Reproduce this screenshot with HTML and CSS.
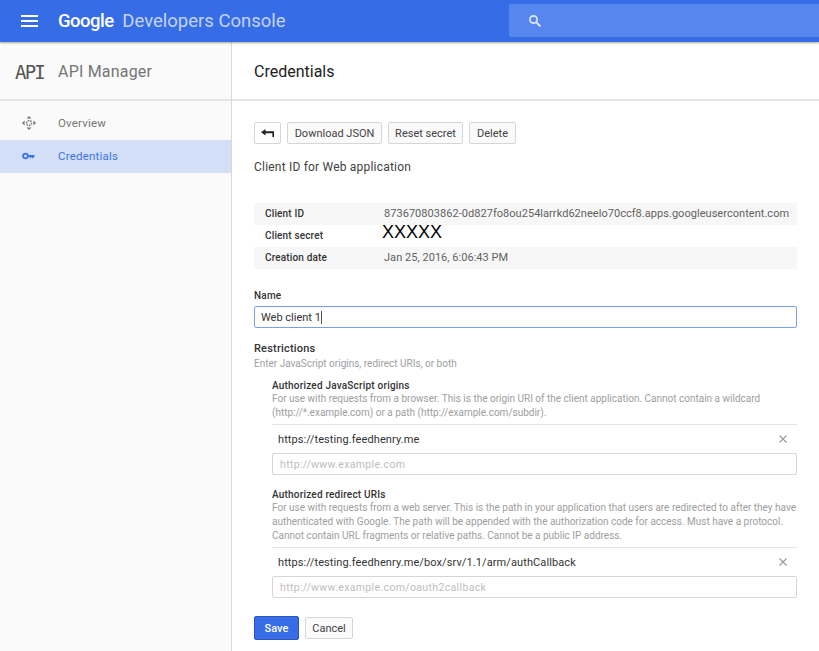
FILE: index.html
```html
<!DOCTYPE html>
<html lang="en">
<head>
    <meta charset="UTF-8">
    <meta name="viewport" content="width=device-width, initial-scale=1.0">
    <title>Credentials</title>
    <link rel="stylesheet" href="styles.css">
</head>
<body>
    <header class="topbar">
        <div class="menu-icon"><span></span><span></span><span></span></div>
        <div class="brand"><span class="brand-google">Google</span> Developers Console</div>
        <div class="search">
            <svg width="14" height="14" viewBox="0 0 14 14"><circle cx="5.500" cy="5.500" r="3.600" fill="none" stroke="#dfe8fb" stroke-width="1.700"/><path d="M8.300 8.300L12.400 12.400" stroke="#dfe8fb" stroke-width="2"/></svg>
        </div>
    </header>
    <div class="layout">
        <aside class="sidebar">
            <div class="side-title"><span class="api-logo">API</span><span>API Manager</span></div>
            <nav class="side-nav">
                <a class="nav-item">
                    <svg width="16" height="16" viewBox="0 0 16 16" fill="#757575"><path d="M8 1l2.400 2.600H5.600zM8 15l-2.400-2.600h4.800zM1 8l2.600-2.400v4.800zM15 8l-2.600 2.400V5.600z"/><path d="M5.500 8a2.500 2.500 0 0 1 5 0a2.500 2.500 0 0 1-5 0z" fill="none" stroke="#757575" stroke-width="1.500" stroke-dasharray="1.500 1"/></svg>
                    Overview
                </a>
                <a class="nav-item active">
                    <svg width="16" height="16" viewBox="0 0 16 16"><circle cx="4.500" cy="8" r="2.400" fill="none" stroke="#3f73e4" stroke-width="1.800"/><path d="M7 7h6.500v2h-1v1.200h-1.400V9h-.8v1.200H8.900V9H7z" fill="#3f73e4"/></svg>
                    Credentials
                </a>
            </nav>
        </aside>
        <main class="content">
            <h1 class="page-title">Credentials</h1>
            <div class="page-body">
                <div class="actions">
                    <button class="btn btn-back"><svg width="13" height="8" viewBox="0 0 13 8"><path d="M0 3.200L4.500 0v2.200h8.500V8h-1.600V4.200H4.500v2.200z" fill="#212121"/></svg></button>
                    <button class="btn btn-download">Download JSON</button>
                    <button class="btn btn-reset">Reset secret</button>
                    <button class="btn btn-delete">Delete</button>
                </div>
                <h2 class="sub-title">Client ID for Web application</h2>
                <div class="info-table">
                    <div class="info-row"><span class="info-label">Client ID</span><span>873670803862-0d827fo8ou254larrkd62neelo70ccf8.apps.googleusercontent.com</span></div>
                    <div class="info-row"><span class="info-label">Client secret</span><span class="redacted">XXXXX</span></div>
                    <div class="info-row"><span class="info-label">Creation date</span><span>Jan 25, 2016, 6:06:43 PM</span></div>
                </div>
                <label class="field-label">Name</label>
                <div class="field focused">Web client 1<span class="caret"></span></div>
                <div class="group-title">Restrictions</div>
                <div class="help">Enter JavaScript origins, redirect URIs, or both</div>
                <section class="uri-block first">
                    <div class="uri-title">Authorized JavaScript origins</div>
                    <p class="help">For use with requests from a browser. This is the origin URI of the client application. Cannot contain a wildcard<br>(http://*.example.com) or a path (http://example.com/subdir).</p>
                    <div class="uri-item"><span>https://testing.feedhenry.me</span><svg class="remove" width="8" height="8" viewBox="0 0 8 8"><path d="M.5.500l7 7M7.500.500l-7 7" stroke="#999" stroke-width="1.100"/></svg></div>
                    <div class="field placeholder">http://www.example.com</div>
                </section>
                <section class="uri-block">
                    <div class="uri-title">Authorized redirect URIs</div>
                    <p class="help">For use with requests from a web server. This is the path in your application that users are redirected to after they have<br>authenticated with Google. The path will be appended with the authorization code for access. Must have a protocol.<br>Cannot contain URL fragments or relative paths. Cannot be a public IP address.</p>
                    <div class="uri-item"><span>https://testing.feedhenry.me/box/srv/1.1/arm/authCallback</span><svg class="remove" width="8" height="8" viewBox="0 0 8 8"><path d="M.5.500l7 7M7.500.500l-7 7" stroke="#999" stroke-width="1.100"/></svg></div>
                    <div class="field placeholder">http://www.example.com/oauth2callback</div>
                </section>
                <div class="form-actions">
                    <button class="btn btn-save">Save</button>
                    <button class="btn btn-cancel">Cancel</button>
                </div>
            </div>
        </main>
    </div>
</body>
</html>
```

FILE: styles.css
```css
html, body {
    height: 100%;
}
body {
    margin: 0;
    height: 651px;
    overflow: hidden;
    font-family: Roboto, Arial, sans-serif;
    font-size: 11px;
    color: #333;
    background: #fff;
}
.topbar {
    display: flex;
    align-items: center;
    height: 42px;
    background: #366de6;
    box-shadow: 0 1px 2px rgba(0, 0, 0, 0.35);
    position: relative;
}
.menu-icon {
    display: flex;
    flex-direction: column;
    gap: 3px;
    width: 17px;
    margin-left: 21px;
}
.menu-icon span {
    height: 2px;
    background: #fff;
}
.brand {
    margin-left: 20px;
    font-size: 18.500px;
    color: #c3d4f8;
    white-space: nowrap;
    width: 451px;
}
.brand-google {
    margin-right: 4px;
    color: #fff;
    font-weight: 500;
    letter-spacing: -0.5px;
}
.search {
    display: flex;
    align-items: center;
    flex: 1;
    height: 33px;
    margin-top: -1px;
    padding-left: 19px;
    background: #5587ee;
    border-radius: 2px 0 0 2px;
}
.layout {
    display: flex;
    height: 609px;
}
.sidebar {
    width: 231px;
    flex: none;
    background: #fafafa;
    border-right: 1px solid #d9d9d9;
}
.side-title {
    display: flex;
    align-items: center;
    box-sizing: border-box;
    height: 59px;
    padding: 2px 0 0 15px;
    font-size: 16px;
    letter-spacing: 0.2px;
    color: #757575;
    border-bottom: 2px solid #e5e5e5;
}
.api-logo {
    width: 43px;
    font-family: "DejaVu Sans Mono", monospace;
    font-size: 19px;
    color: #555;
    letter-spacing: -1.800px;
}
.side-nav {
    padding-top: 6px;
}
.nav-item {
    display: flex;
    align-items: center;
    gap: 21px;
    box-sizing: border-box;
    height: 33px;
    padding: 0 0 1px 21px;
    font-size: 11.500px;
    letter-spacing: 0.2px;
    color: #757575;
}
.nav-item.active {
    background: #d2dff6;
    color: #3f73e4;
}
.content {
    flex: 1;
    min-width: 0;
}
.page-title {
    display: flex;
    align-items: center;
    box-sizing: border-box;
    height: 59px;
    margin: 0;
    padding: 2px 0 0 22px;
    font-size: 16px;
    font-weight: 400;
    color: #212121;
    border-bottom: 2px solid #e5e5e5;
}
.page-body {
    padding: 21px 22px 0 22px;
}
.actions {
    display: flex;
    gap: 6px;
}
.btn {
    height: 22px;
    padding: 0;
    font-family: Roboto, Arial, sans-serif;
    font-size: 11px;
    color: #424242;
    background: #fafafa;
    border: 1px solid #d6d6d6;
    border-radius: 2px;
}
.btn-back {
    display: flex;
    align-items: center;
    justify-content: center;
    width: 27px;
    background: #fff;
}
.btn-download {
    width: 95px;
}
.btn-reset {
    width: 75px;
}
.btn-delete {
    width: 47px;
}
.btn-cancel {
    width: 48px;
}
.sub-title {
    margin: 15px 0 0;
    font-size: 12px;
    line-height: 16px;
    font-weight: 400;
    letter-spacing: 0.2px;
    color: #424242;
}
.info-table {
    margin-top: 28px;
}
.info-row {
    display: flex;
    align-items: center;
    box-sizing: border-box;
    height: 22px;
    padding: 0 0 1px 11px;
    font-size: 11px;
    letter-spacing: 0.04px;
    color: #616161;
    white-space: nowrap;
}
.info-row:nth-child(odd) {
    background: #f7f7f7;
}
.info-label {
    width: 119px;
    flex: none;
    font-size: 10px;
    font-weight: 500;
    letter-spacing: 0.15px;
    color: #333;
}
.redacted {
    margin: -6px 0 0 -2px;
    font-family: "Liberation Sans", Arial, sans-serif;
    font-size: 18px;
    color: #000;
    letter-spacing: 0;
}
.field-label {
    display: block;
    margin-top: 20px;
    font-size: 10px;
    line-height: 14px;
    font-weight: 500;
    letter-spacing: 0.2px;
}
.field {
    display: flex;
    align-items: center;
    box-sizing: border-box;
    height: 22px;
    padding-left: 7px;
    font-size: 11px;
    background: #fff;
    border: 1px solid #d6d6d6;
    border-radius: 2px;
}
.field.focused {
    margin-top: 3px;
    padding-left: 6px;
    border-color: #7d9fe8;
}
.field.placeholder {
    color: #bdbdbd;
    font-size: 10.500px;
    letter-spacing: 0.35px;
}
.caret {
    width: 1px;
    height: 13px;
    background: #555;
}
.group-title {
    margin-top: 14px;
    font-size: 11px;
    line-height: 13px;
    font-weight: 500;
    letter-spacing: 0.2px;
}
.help {
    margin: 0;
    font-size: 10px;
    line-height: 14px;
    color: #9e9e9e;
    white-space: nowrap;
}
.group-title + .help {
    margin-top: 2px;
}
.uri-block {
    margin: 13px 0 0 18px;
}
.uri-block.first {
    margin-top: 8px;
}
.uri-title {
    font-size: 10px;
    line-height: 13px;
    font-weight: 500;
    letter-spacing: 0.2px;
}
.uri-item {
    display: flex;
    justify-content: space-between;
    align-items: center;
    box-sizing: border-box;
    height: 29px;
    margin-top: 4px;
    padding: 0 10px 0 6px;
    font-size: 11px;
    letter-spacing: 0.1px;
    border-top: 1px solid #e5e5e5;
}
.form-actions {
    display: flex;
    align-items: center;
    gap: 6px;
    margin-top: 18px;
}
.btn-save {
    height: 24px;
    width: 45px;
    font-weight: 500;
    color: #fff;
    background: #366de6;
    border-color: #2a56bd;
}
```
